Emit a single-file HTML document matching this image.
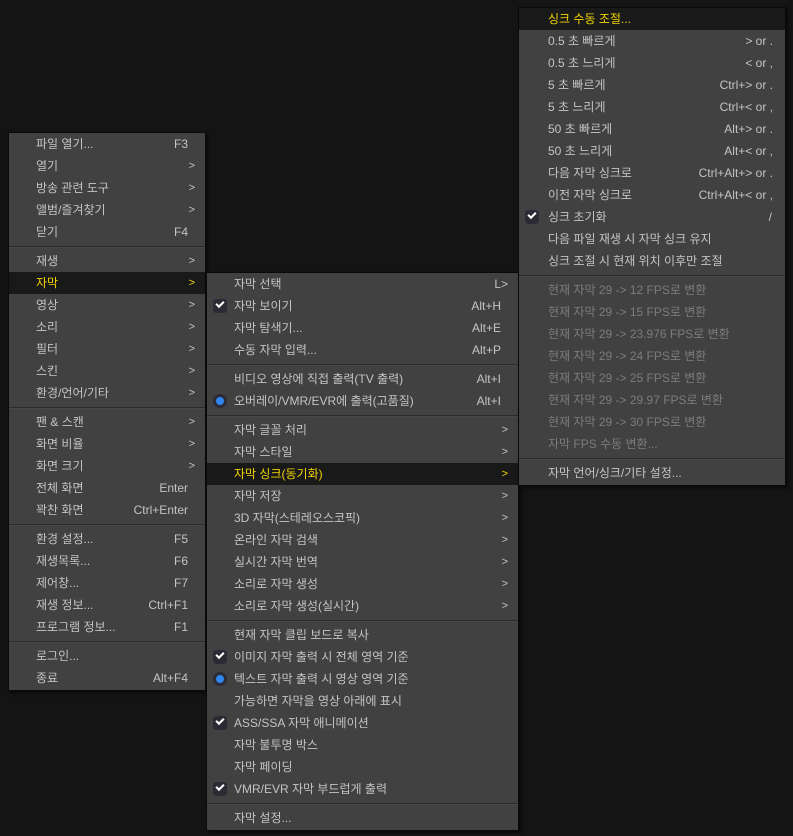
<!DOCTYPE html>
<html><head><meta charset="utf-8"><style>
*{margin:0;padding:0;box-sizing:border-box}
body{width:793px;height:836px;background:#141414;position:relative;overflow:hidden;font-family:"Liberation Sans","Noto Sans CJK KR",sans-serif;font-size:12px;color:#c4c4c4}
.m{position:absolute;background:#414141;border:1px solid #0a0a0a;box-shadow:2px 2px 3px rgba(0,0,0,.6)}
.r{height:22px;line-height:22px;position:relative;white-space:nowrap}
.r .t{position:absolute;left:var(--tx)}
.r .k{position:absolute;right:var(--kx)}
.r .a{position:absolute;right:var(--ax);font-size:11px}
.h{background:#191919;color:#f2d400}
.d{color:#7c7c7c}
.s{height:7px;position:relative}
.s:after{content:"";position:absolute;left:0;right:0;top:3px;height:1px;background:#2b2b2b;border-bottom:1px solid #474747}
.c{position:absolute;left:6px;top:4px;width:14px;height:14px;border-radius:3px;background:#2b2b36}
.c:after{content:"";position:absolute;left:3px;top:2px;width:6px;height:3px;border-left:2px solid #fff;border-bottom:2px solid #fff;transform:rotate(-45deg)}
.o{position:absolute;left:6px;top:4px;width:14px;height:14px;border-radius:7px;background:#2b2b36}
.o:after{content:"";position:absolute;left:3px;top:3px;width:8px;height:8px;border-radius:4px;background:#2f86f0}
</style></head><body>

<div class="m" style="left:8px;top:132px;width:198px;padding-bottom:1px;--tx:27px;--kx:17px;--ax:10px">
<div class="r"><span class="t">파일 열기...</span><span class="k">F3</span></div>
<div class="r"><span class="t">열기</span><span class="a">&gt;</span></div>
<div class="r"><span class="t">방송 관련 도구</span><span class="a">&gt;</span></div>
<div class="r"><span class="t">앨범/즐겨찾기</span><span class="a">&gt;</span></div>
<div class="r"><span class="t">닫기</span><span class="k">F4</span></div>
<div class="s"></div>
<div class="r"><span class="t">재생</span><span class="a">&gt;</span></div>
<div class="r h"><span class="t">자막</span><span class="a">&gt;</span></div>
<div class="r"><span class="t">영상</span><span class="a">&gt;</span></div>
<div class="r"><span class="t">소리</span><span class="a">&gt;</span></div>
<div class="r"><span class="t">필터</span><span class="a">&gt;</span></div>
<div class="r"><span class="t">스킨</span><span class="a">&gt;</span></div>
<div class="r"><span class="t">환경/언어/기타</span><span class="a">&gt;</span></div>
<div class="s"></div>
<div class="r"><span class="t">팬 &amp; 스캔</span><span class="a">&gt;</span></div>
<div class="r"><span class="t">화면 비율</span><span class="a">&gt;</span></div>
<div class="r"><span class="t">화면 크기</span><span class="a">&gt;</span></div>
<div class="r"><span class="t">전체 화면</span><span class="k">Enter</span></div>
<div class="r"><span class="t">꽉찬 화면</span><span class="k">Ctrl+Enter</span></div>
<div class="s"></div>
<div class="r"><span class="t">환경 설정...</span><span class="k">F5</span></div>
<div class="r"><span class="t">재생목록...</span><span class="k">F6</span></div>
<div class="r"><span class="t">제어창...</span><span class="k">F7</span></div>
<div class="r"><span class="t">재생 정보...</span><span class="k">Ctrl+F1</span></div>
<div class="r"><span class="t">프로그램 정보...</span><span class="k">F1</span></div>
<div class="s"></div>
<div class="r"><span class="t">로그인...</span></div>
<div class="r"><span class="t">종료</span><span class="k">Alt+F4</span></div>
</div>

<div class="m" style="left:206px;top:272px;width:313px;padding-bottom:1px;--tx:27px;--kx:17px;--ax:10px">
<div class="r"><span class="t">자막 선택</span><span class="k" style="right:10px">L&gt;</span></div>
<div class="r"><i class="c"></i><span class="t">자막 보이기</span><span class="k">Alt+H</span></div>
<div class="r"><span class="t">자막 탐색기...</span><span class="k">Alt+E</span></div>
<div class="r"><span class="t">수동 자막 입력...</span><span class="k">Alt+P</span></div>
<div class="s"></div>
<div class="r"><span class="t">비디오 영상에 직접 출력(TV 출력)</span><span class="k">Alt+I</span></div>
<div class="r"><i class="o"></i><span class="t">오버레이/VMR/EVR에 출력(고품질)</span><span class="k">Alt+I</span></div>
<div class="s"></div>
<div class="r"><span class="t">자막 글꼴 처리</span><span class="a">&gt;</span></div>
<div class="r"><span class="t">자막 스타일</span><span class="a">&gt;</span></div>
<div class="r h"><span class="t">자막 싱크(동기화)</span><span class="a">&gt;</span></div>
<div class="r"><span class="t">자막 저장</span><span class="a">&gt;</span></div>
<div class="r"><span class="t">3D 자막(스테레오스코픽)</span><span class="a">&gt;</span></div>
<div class="r"><span class="t">온라인 자막 검색</span><span class="a">&gt;</span></div>
<div class="r"><span class="t">실시간 자막 번역</span><span class="a">&gt;</span></div>
<div class="r"><span class="t">소리로 자막 생성</span><span class="a">&gt;</span></div>
<div class="r"><span class="t">소리로 자막 생성(실시간)</span><span class="a">&gt;</span></div>
<div class="s"></div>
<div class="r"><span class="t">현재 자막 클립 보드로 복사</span></div>
<div class="r"><i class="c"></i><span class="t">이미지 자막 출력 시 전체 영역 기준</span></div>
<div class="r"><i class="o"></i><span class="t">텍스트 자막 출력 시 영상 영역 기준</span></div>
<div class="r"><span class="t">가능하면 자막을 영상 아래에 표시</span></div>
<div class="r"><i class="c"></i><span class="t">ASS/SSA 자막 애니메이션</span></div>
<div class="r"><span class="t">자막 불투명 박스</span></div>
<div class="r"><span class="t">자막 페이딩</span></div>
<div class="r"><i class="c"></i><span class="t">VMR/EVR 자막 부드럽게 출력</span></div>
<div class="s"></div>
<div class="r"><span class="t">자막 설정...</span></div>
</div>

<div class="m" style="left:518px;top:7px;width:268px;padding-bottom:1px;--tx:29px;--kx:12px;--ax:10px">
<div class="r h"><span class="t">싱크 수동 조절...</span></div>
<div class="r"><span class="t">0.5 초 빠르게</span><span class="k">&gt; or .</span></div>
<div class="r"><span class="t">0.5 초 느리게</span><span class="k">&lt; or ,</span></div>
<div class="r"><span class="t">5 초 빠르게</span><span class="k">Ctrl+&gt; or .</span></div>
<div class="r"><span class="t">5 초 느리게</span><span class="k">Ctrl+&lt; or ,</span></div>
<div class="r"><span class="t">50 초 빠르게</span><span class="k">Alt+&gt; or .</span></div>
<div class="r"><span class="t">50 초 느리게</span><span class="k">Alt+&lt; or ,</span></div>
<div class="r"><span class="t">다음 자막 싱크로</span><span class="k">Ctrl+Alt+&gt; or .</span></div>
<div class="r"><span class="t">이전 자막 싱크로</span><span class="k">Ctrl+Alt+&lt; or ,</span></div>
<div class="r"><i class="c"></i><span class="t">싱크 초기화</span><span class="k" style="right:13px">/</span></div>
<div class="r"><span class="t">다음 파일 재생 시 자막 싱크 유지</span></div>
<div class="r"><span class="t">싱크 조절 시 현재 위치 이후만 조절</span></div>
<div class="s"></div>
<div class="r d"><span class="t">현재 자막 29 -&gt; 12 FPS로 변환</span></div>
<div class="r d"><span class="t">현재 자막 29 -&gt; 15 FPS로 변환</span></div>
<div class="r d"><span class="t">현재 자막 29 -&gt; 23.976 FPS로 변환</span></div>
<div class="r d"><span class="t">현재 자막 29 -&gt; 24 FPS로 변환</span></div>
<div class="r d"><span class="t">현재 자막 29 -&gt; 25 FPS로 변환</span></div>
<div class="r d"><span class="t">현재 자막 29 -&gt; 29.97 FPS로 변환</span></div>
<div class="r d"><span class="t">현재 자막 29 -&gt; 30 FPS로 변환</span></div>
<div class="r d"><span class="t">자막 FPS 수동 변환...</span></div>
<div class="s"></div>
<div class="r"><span class="t">자막 언어/싱크/기타 설정...</span></div>
</div>
</body></html>
